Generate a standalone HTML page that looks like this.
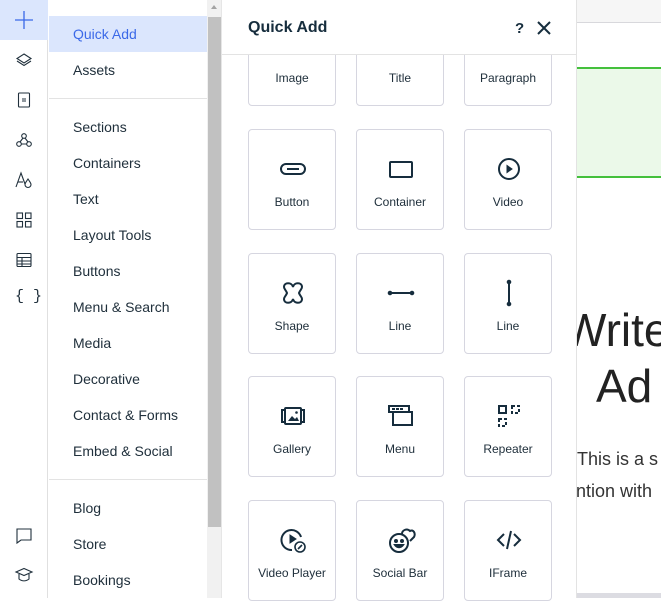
<!DOCTYPE html>
<html><head><meta charset="utf-8"><style>
*{box-sizing:border-box;margin:0;padding:0}
body{width:661px;height:598px;overflow:hidden;position:relative;background:#fff;font-family:"Liberation Sans",sans-serif;color:#20303c}
.abs{position:absolute}
.bar{left:0;top:0;width:48px;height:598px;background:#fff;border-right:1px solid #e0e0e0}
.ic{position:absolute;left:14px;width:20px;height:20px}
.menu{left:49px;top:0;width:158px;height:598px;background:#fff}
.mi{position:absolute;left:24px;font-size:14px;color:#20303c;line-height:18px}
.sb{left:207px;top:0;width:15px;height:598px;background:#f1f1f1;border-right:1px solid #e6e6e6}
.qa{left:222px;top:0;width:355px;height:598px;background:#fff;border-right:1px solid #e3e3e3}
.card{position:absolute;width:88px;height:101px;border:1px solid #d6d6e0;border-radius:4px;background:#fff}
.card span{position:absolute;left:0;right:0;bottom:20px;text-align:center;font-size:12px;color:#20303c}
.card svg{position:absolute;left:29px;top:24px;width:30px;height:30px;fill:none;stroke:#162d3d;stroke-width:2}
</style></head><body>

<div class="abs bar">
  <div class="abs" style="left:0;top:0;width:48px;height:40px;background:#dbe6fd"></div>
  <svg class="ic" style="top:10px" viewBox="0 0 20 20"><path d="M10 1v18M1 10h18" stroke="#3b69e8" stroke-width="1.3"/></svg>
  <svg class="ic" style="top:50px" viewBox="0 0 20 20" fill="none" stroke="#20303c" stroke-width="1.1"><path d="M10 4l7 4.5-7 4.5-7-4.5z"/><path d="M3 11l7 4.5 7-4.5"/></svg>
  <svg class="ic" style="top:90px" viewBox="0 0 20 20" fill="none" stroke="#20303c" stroke-width="1.1"><rect x="4.5" y="3" width="11" height="14" rx="1"/><path d="M8 9h4M8 11h4"/></svg>
  <svg class="ic" style="top:130px" viewBox="0 0 20 20" fill="none" stroke="#20303c" stroke-width="1.1"><circle cx="10" cy="6" r="2.3"/><circle cx="5" cy="14" r="2.3"/><circle cx="15" cy="14" r="2.3"/><path d="M9 8l-3 4M11 8l3 4M7.3 14h5.4"/></svg>
  <svg class="ic" style="top:170px" viewBox="0 0 20 20" fill="none" stroke="#20303c" stroke-width="1.1"><path d="M2 17L7 3l4 11"/><path d="M4 12h5"/><path d="M14 9c-2 3-3 4-3 5.5a3 3 0 006 0c0-1.5-1-2.5-3-5.5z"/></svg>
  <svg class="ic" style="top:210px" viewBox="0 0 20 20" fill="none" stroke="#20303c" stroke-width="1.1"><rect x="3" y="3" width="5.5" height="5.5"/><rect x="11.5" y="3" width="5.5" height="5.5"/><rect x="3" y="11.5" width="5.5" height="5.5"/><rect x="11.5" y="11.5" width="5.5" height="5.5"/></svg>
  <svg class="ic" style="top:250px" viewBox="0 0 20 20" fill="none" stroke="#20303c" stroke-width="1.1"><rect x="3" y="3.5" width="14" height="13" rx="1"/><path d="M3 7.5h14M3 11h14M3 14h14M8 7.5v9"/></svg>
  <div class="abs" style="left:15px;top:288px;font-size:15px;font-family:'Liberation Mono',monospace;color:#20303c">{ }</div>
  <svg class="ic" style="top:526px" viewBox="0 0 20 20" fill="none" stroke="#20303c" stroke-width="1.1"><path d="M3 3h14v11H7l-4 3z"/></svg>
  <svg class="ic" style="top:565px" viewBox="0 0 20 20" fill="none" stroke="#20303c" stroke-width="1.1"><path d="M2 7l8-3.5L18 7l-8 3.5z"/><path d="M5 9v5c3 2.5 7 2.5 10 0V9"/></svg>
</div>

<div class="abs menu">
  <div class="abs" style="left:0;top:16px;width:158px;height:36px;background:#dbe6fd"></div>
  <div class="mi" style="top:25px;color:#3b69e8">Quick Add</div>
  <div class="mi" style="top:61px">Assets</div>
  <div class="abs" style="left:0;top:98px;width:158px;height:1px;background:#e3e3e3"></div>
  <div class="mi" style="top:118px">Sections</div>
  <div class="mi" style="top:154px">Containers</div>
  <div class="mi" style="top:190px">Text</div>
  <div class="mi" style="top:226px">Layout Tools</div>
  <div class="mi" style="top:262px">Buttons</div>
  <div class="mi" style="top:298px">Menu &amp; Search</div>
  <div class="mi" style="top:334px">Media</div>
  <div class="mi" style="top:370px">Decorative</div>
  <div class="mi" style="top:406px">Contact &amp; Forms</div>
  <div class="mi" style="top:442px">Embed &amp; Social</div>
  <div class="abs" style="left:0;top:479px;width:158px;height:1px;background:#e3e3e3"></div>
  <div class="mi" style="top:499px">Blog</div>
  <div class="mi" style="top:535px">Store</div>
  <div class="mi" style="top:571px">Bookings</div>
</div>

<div class="abs sb">
  <div class="abs" style="left:4px;top:5px;width:0;height:0;border-left:3.5px solid transparent;border-right:3.5px solid transparent;border-bottom:4px solid #a3a3a3"></div>
  <div class="abs" style="left:1px;top:17px;width:13px;height:510px;background:#c1c1c1"></div>
</div>

<div class="abs qa">
  <div class="card" style="left:26px;top:5px"><span>Image</span></div>
  <div class="card" style="left:134px;top:5px"><span>Title</span></div>
  <div class="card" style="left:242px;top:5px"><span>Paragraph</span></div>

  <div class="card" style="left:26px;top:129px"><svg viewBox="0 0 30 30"><rect x="3" y="10" width="24" height="10" rx="5"/><path d="M9 15h12"/></svg><span>Button</span></div>
  <div class="card" style="left:134px;top:129px"><svg viewBox="0 0 30 30"><rect x="4" y="8" width="22" height="15" rx="1"/></svg><span>Container</span></div>
  <div class="card" style="left:242px;top:129px"><svg viewBox="0 0 30 30"><circle cx="15" cy="15" r="10"/><path d="M13 11.5v7l5-3.5z" fill="#162d3d" stroke-width="1"/></svg><span>Video</span></div>

  <div class="card" style="left:26px;top:253px"><svg viewBox="0 0 30 30"><path d="M15 9c-1-5-9-5-9 0 0 2 2 3 3 6-1 3-3 4-3 6 0 5 8 5 9 0 1 5 9 5 9 0 0-2-2-3-3-6 1-3 3-4 3-6 0-5-8-5-9 0z"/></svg><span>Shape</span></div>
  <div class="card" style="left:134px;top:253px"><svg viewBox="0 0 30 30"><path d="M4 15h22"/><circle cx="4" cy="15" r="1.3" fill="#162d3d"/><circle cx="26" cy="15" r="1.3" fill="#162d3d"/></svg><span>Line</span></div>
  <div class="card" style="left:242px;top:253px"><svg viewBox="0 0 30 30"><path d="M15 4v22"/><circle cx="15" cy="4" r="1.3" fill="#162d3d"/><circle cx="15" cy="26" r="1.3" fill="#162d3d"/></svg><span>Line</span></div>

  <div class="card" style="left:26px;top:376px"><svg viewBox="0 0 30 30"><rect x="7" y="7" width="16" height="16" rx="1"/><path d="M7 9H4v12h3M23 9h3v12h-3"/><path d="M10 20l4-5 3 3 2-2 2 4z" fill="#162d3d" stroke-width="0"/><circle cx="18.5" cy="11.5" r="1.3" fill="#162d3d" stroke-width="0"/></svg><span>Gallery</span></div>
  <div class="card" style="left:134px;top:376px"><svg viewBox="0 0 30 30"><rect x="3" y="5" width="20" height="6"/><path d="M7 24V11h19v13zM6 8h3M10 8h3M14 8h3" /></svg><span>Menu</span></div>
  <div class="card" style="left:242px;top:376px"><svg viewBox="0 0 30 30"><rect x="5" y="5" width="7" height="7"/><rect x="18" y="5" width="7" height="7" stroke-dasharray="3 2"/><rect x="5" y="18" width="7" height="7" stroke-dasharray="3 2"/></svg><span>Repeater</span></div>

  <div class="card" style="left:26px;top:500px"><svg viewBox="0 0 30 30"><path d="M23 12a10 10 0 10-9 13"/><path d="M12 10v8l6-4z" fill="#162d3d" stroke-width="1"/><circle cx="22" cy="22" r="5" stroke-width="1.6"/><path d="M20 24l4-4" stroke-width="1.6"/></svg><span>Video Player</span></div>
  <div class="card" style="left:134px;top:500px"><svg viewBox="0 0 30 30"><circle cx="13" cy="18" r="9"/><path d="M16 9c0-4 5-6 8-3 3-2 6 2 4 6l-4 4"/><circle cx="10" cy="16" r="1" fill="#162d3d"/><circle cx="16" cy="16" r="1" fill="#162d3d"/><path d="M9 20c2 3 6 3 8 0z" fill="#162d3d"/></svg><span>Social Bar</span></div>
  <div class="card" style="left:242px;top:500px"><svg viewBox="0 0 30 30"><path d="M10 9l-6 6 6 6M20 9l6 6-6 6M17 6l-4 18"/></svg><span>IFrame</span></div>

  <div class="abs" style="left:0;top:0;width:354px;height:55px;background:#fff;border-bottom:1px solid #e3e3e3"></div>
  <div class="abs" style="left:26px;top:19px;font-size:16px;font-weight:bold;color:#162d3d">Quick Add</div>
  <div class="abs" style="left:293px;top:20px;font-size:15px;font-weight:bold;color:#162d3d">?</div>
  <svg class="abs" style="left:315px;top:21px;width:14px;height:14px" viewBox="0 0 14 14"><path d="M1 1l12 12M13 1L1 13" stroke="#162d3d" stroke-width="2"/></svg>
</div>

<div class="abs" style="left:577px;top:0;width:84px;height:598px;background:#fff;overflow:hidden">
  <div class="abs" style="left:0;top:0;width:84px;height:23px;background:#f6f6f6;border-bottom:1px solid #d8d8dc"></div>
  <div class="abs" style="left:0;top:67px;width:84px;height:111px;background:#ebf9e9;border-top:2px solid #44c03c;border-bottom:2px solid #44c03c"></div>
  <div class="abs" style="left:-14px;top:303px;font-size:46px;color:#222;white-space:nowrap">Write</div>
  <div class="abs" style="left:19px;top:359px;font-size:46px;color:#222;white-space:nowrap">Ad</div>
  <div class="abs" style="left:0;top:449px;font-size:18px;color:#333;white-space:nowrap">This is a s</div>
  <div class="abs" style="left:-1px;top:481px;font-size:18px;color:#333;white-space:nowrap">ntion with</div>
  <div class="abs" style="left:0;top:593px;width:84px;height:5px;background:#dcdce2"></div>
</div>
</body></html>
